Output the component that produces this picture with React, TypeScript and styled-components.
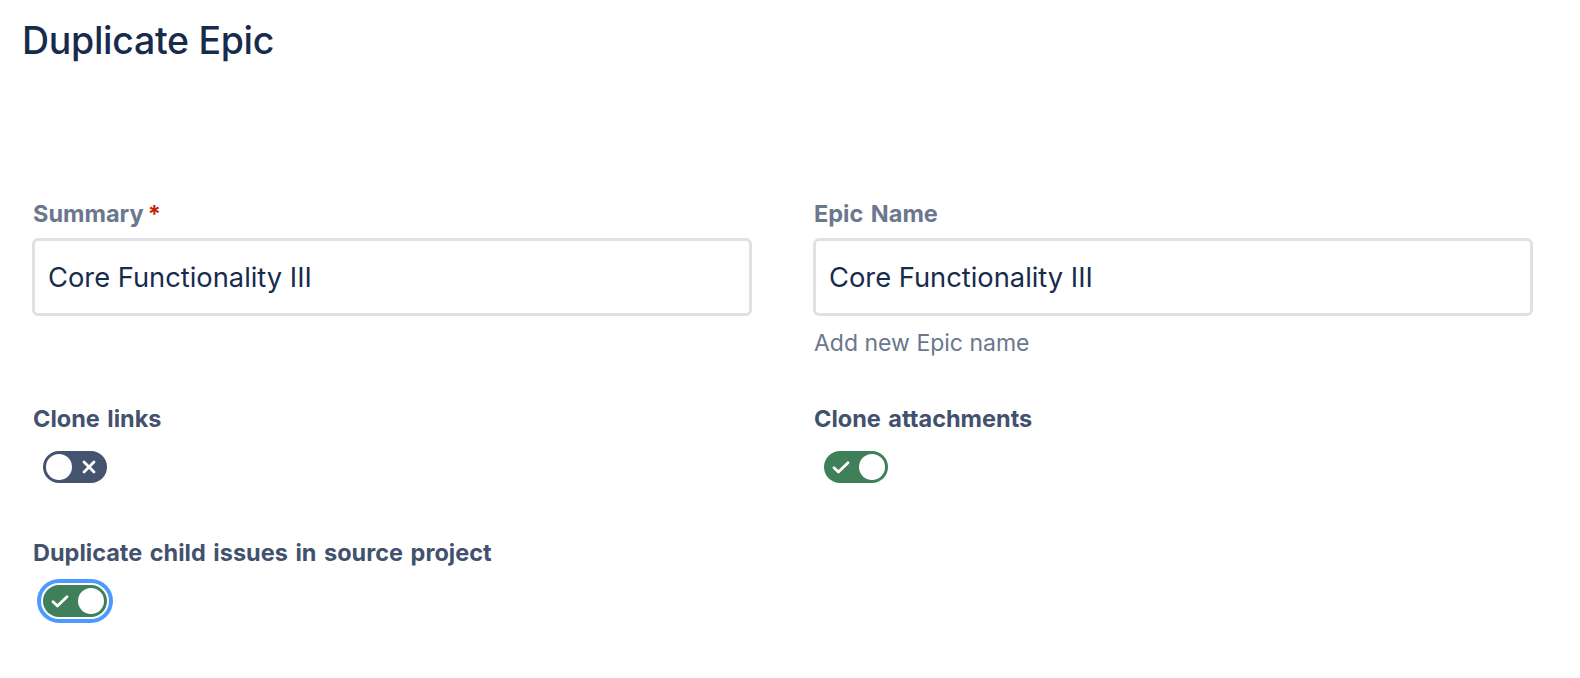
import React from 'react';
import styled, { createGlobalStyle, css } from 'styled-components';

const GlobalStyle = createGlobalStyle`
  html, body {
    margin: 0;
    padding: 0;
    background: #fff;
  }
  body {
    font-family: Inter, "Liberation Sans", sans-serif;
    -webkit-font-smoothing: antialiased;
  }
`;

const Page = styled.div`
  width: 1580px;
  height: 678px;
  box-sizing: border-box;
  padding-top: 19px;
`;

const Title = styled.h1`
  margin: 0 0 0 22px;
  font-size: 37.5px;
  line-height: 44px;
  font-weight: 500;
  letter-spacing: -0.3px;
  color: #172b4d;
`;

const Form = styled.div`
  display: grid;
  grid-template-columns: 720px 720px;
  column-gap: 61px;
  row-gap: 48px;
  align-items: start;
  padding: 137px 0 0 32px;
`;

const Field = styled.div`
  display: flex;
  flex-direction: column;
  align-items: flex-start;
`;

const Label = styled.label<{ $muted?: boolean }>`
  display: flex;
  gap: 4px;
  font-size: 23.5px;
  line-height: 28px;
  font-weight: 700;
  word-spacing: 2px;
  color: ${(p) => (p.$muted ? '#6b778c' : '#42526e')};
  margin-left: 1px;
  margin-bottom: 10px;
`;

const Required = styled.span`
  color: #bf2600;
`;

const Input = styled.div`
  box-sizing: border-box;
  width: 720px;
  height: 78px;
  border: 3px solid #dfe1e6;
  border-radius: 6px;
  padding: 0 13px;
  display: flex;
  align-items: center;
  font-size: 27.3px;
  color: #172b4d;
`;

const Helper = styled.div`
  margin-top: 13px;
  margin-left: 1px;
  font-size: 23px;
  line-height: 28px;
  color: #6b778c;
`;

const ToggleFrame = styled.span`
  display: inline-flex;
  padding: 8px;
  margin-left: 3px;
`;

const Track = styled.span<{ $on: boolean; $focused?: boolean }>`
  position: relative;
  width: 64px;
  height: 32px;
  border-radius: 16px;
  background: ${(p) => (p.$on ? '#3f805a' : '#44546f')};
  ${(p) =>
    p.$focused &&
    css`
      box-shadow: 0 0 0 2px #fff, 0 0 0 6px #4c9aff;
    `}
`;

const Knob = styled.span<{ $on: boolean }>`
  position: absolute;
  top: 3px;
  left: ${(p) => (p.$on ? '35px' : '3px')};
  width: 26px;
  height: 26px;
  border-radius: 50%;
  background: #fff;
`;

const IconSlot = styled.span<{ $side: 'left' | 'right' }>`
  position: absolute;
  top: 6px;
  ${(p) => (p.$side === 'left' ? 'left: 7px;' : 'right: 8px;')}
  width: 20px;
  height: 20px;
  display: flex;
`;

function Toggle({ on, focused }: { on: boolean; focused?: boolean }) {
  return (
    <ToggleFrame>
      <Track $on={on} $focused={focused}>
        {on ? (
          <IconSlot $side="left">
            <svg width="20" height="20" viewBox="0 0 20 20">
              <path d="M3 10.8l4.4 4.2L17 5.8" fill="none" stroke="#fff" strokeWidth="2.8" strokeLinecap="round" strokeLinejoin="round" />
            </svg>
          </IconSlot>
        ) : (
          <IconSlot $side="right">
            <svg width="20" height="20" viewBox="0 0 20 20">
              <path d="M5 5l10 10M15 5L5 15" fill="none" stroke="#fff" strokeWidth="2.8" strokeLinecap="round" />
            </svg>
          </IconSlot>
        )}
        <Knob $on={on} />
      </Track>
    </ToggleFrame>
  );
}

export default function App() {
  return (
    <Page>
      <GlobalStyle />
      <Title>Duplicate Epic</Title>
      <Form>
        <Field>
          <Label $muted>
            Summary<Required>*</Required>
          </Label>
          <Input>Core Functionality III</Input>
        </Field>
        <Field>
          <Label $muted>Epic Name</Label>
          <Input>Core Functionality III</Input>
          <Helper>Add new Epic name</Helper>
        </Field>

        <Field>
          <Label>Clone links</Label>
          <Toggle on={false} />
        </Field>
        <Field>
          <Label>Clone attachments</Label>
          <Toggle on />
        </Field>

        <Field>
          <Label>Duplicate child issues in source project</Label>
          <Toggle on focused />
        </Field>
      </Form>
    </Page>
  );
}
